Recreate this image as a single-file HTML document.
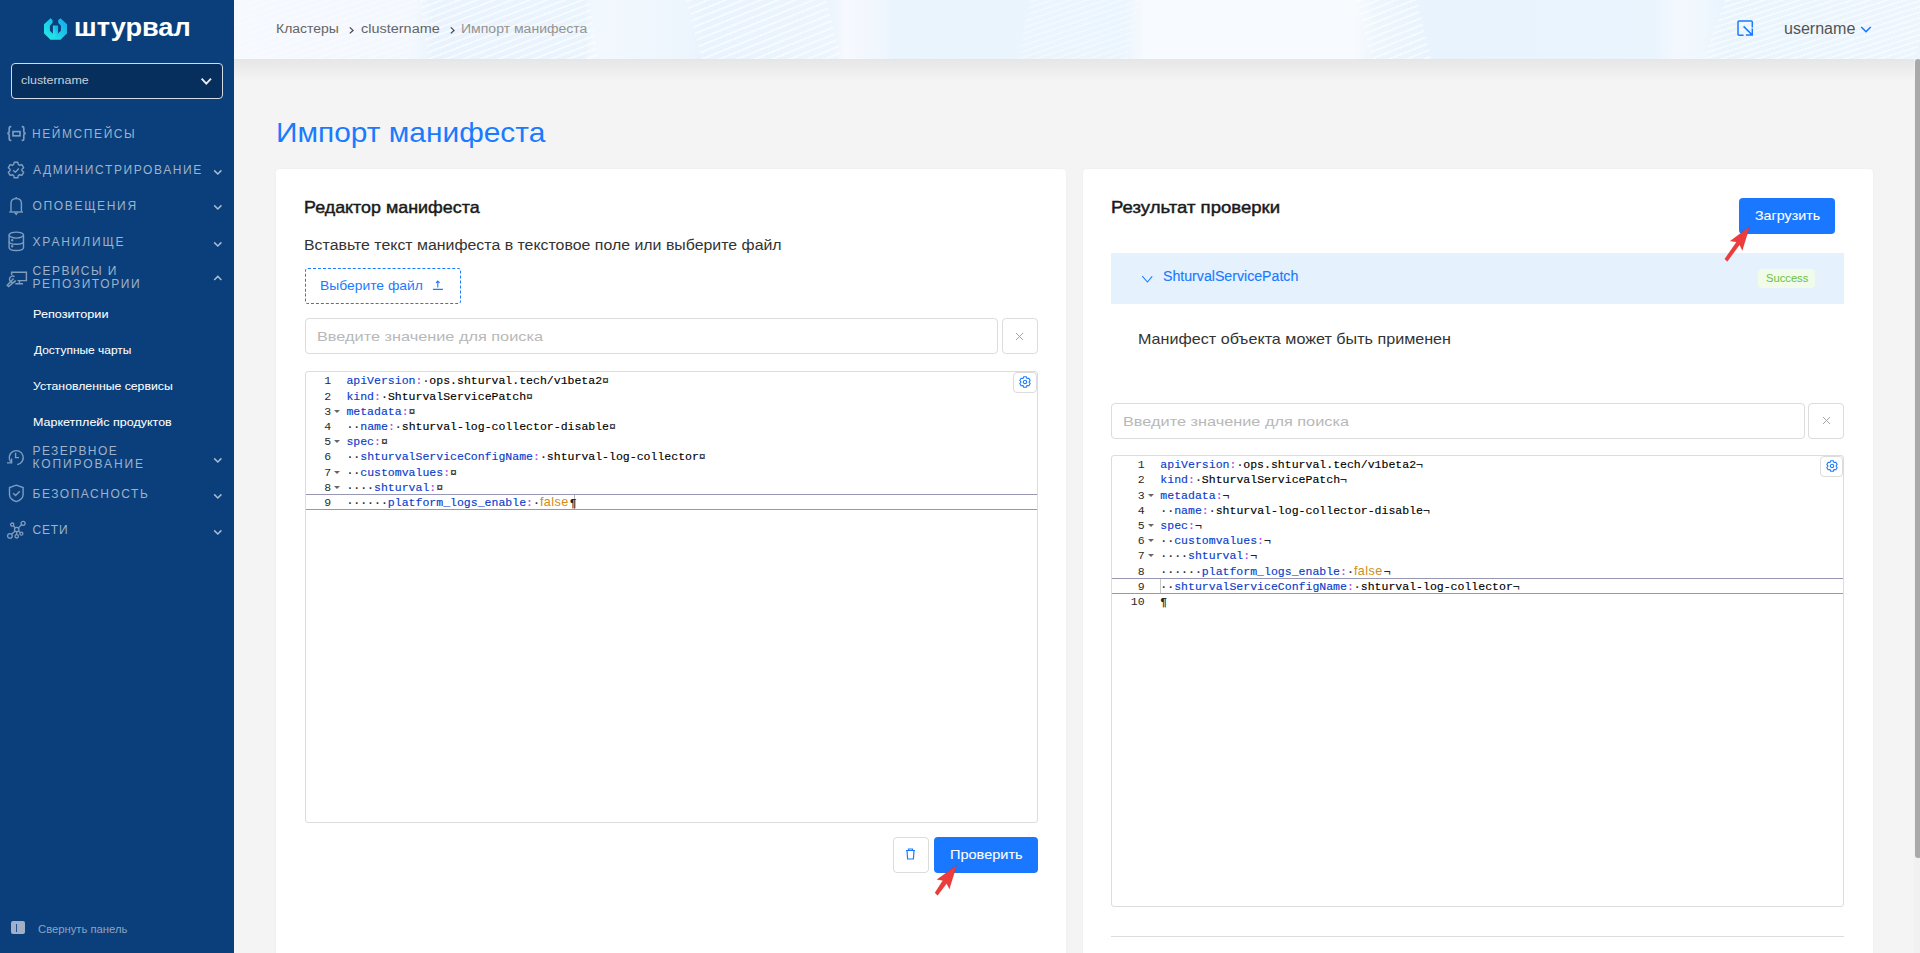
<!DOCTYPE html>
<html lang="ru">
<head>
<meta charset="utf-8">
<title>Импорт манифеста</title>
<style>
*{box-sizing:border-box;margin:0;padding:0}
html,body{width:1920px;height:953px;overflow:hidden}
body{position:relative;background:#f4f4f4;font-family:"Liberation Sans",sans-serif;color:#333}
.a{position:absolute}
.t{position:absolute;white-space:nowrap;line-height:1;transform-origin:0 0}
#side{left:0;top:0;width:234px;height:953px;background:#0a3f7b}
#hdr{left:234px;top:0;width:1686px;height:59px;background:linear-gradient(90deg,#f6f9fe 0px,#f3f8fe 180px,#e9f3fd 200px,#eaf4fd 350px,#f2f8fe 360px,#eef6fd 450px,#e8f3fd 470px,#edf5fd 600px,#f6f9fe 610px,#f0f6fd 650px,#e9f4fd 660px,#ebf5fd 890px,#f7fafe 910px,#f8fbfe 1120px,#eef6fd 1140px,#e8f3fd 1200px,#eaf4fd 1420px,#f3f8fe 1440px,#f0f7fd 1470px,#e9f4fd 1490px,#edf6fd 1686px);overflow:hidden}
.stripes{position:absolute;top:-10px;height:80px;background:repeating-linear-gradient(160deg,rgba(255,255,255,0) 0px,rgba(255,255,255,0) 4px,rgba(255,255,255,.55) 4px,rgba(255,255,255,.55) 6px)}
#hshadow{left:234px;top:59px;width:1686px;height:22px;background:linear-gradient(#e6e6e6,#f4f4f4)}
.card{background:#fff;border-radius:4px;box-shadow:0 0 3px rgba(0,0,0,.04)}
.inp{border:1px solid #dcdcdc;border-radius:4px;background:#fff}
.grp{color:#9fb2ca;font-size:12px;letter-spacing:2.1px}
.sub{color:#fff;font-size:11px}
.chev{position:absolute;width:6px;height:6px;border-right:1.6px solid #9fb2ca;border-bottom:1.6px solid #9fb2ca;transform:rotate(45deg)}
.code{font-family:"Liberation Mono",monospace;font-size:11.53px;line-height:15.23px;white-space:pre;color:#000;-webkit-text-stroke-width:0.15px}
.ln{position:absolute;font-family:"Liberation Mono",monospace;font-size:11.53px;color:#2a2a2a;white-space:pre;text-align:right}
.fold{width:0;height:0;border-left:3px solid transparent;border-right:3px solid transparent;border-top:3.5px solid #666;margin-top:6px}
.k{color:#0a3ccc}.c{color:#b648e6}.w{color:#222}.f{color:#d28c17;font-family:"Liberation Sans",sans-serif;font-size:12.6px;display:inline-block;width:29.8px;letter-spacing:0.45px;-webkit-text-stroke-width:0}
</style>
</head>
<body>
<!-- SIDEBAR -->
<div id="side" class="a">
  <svg class="a" style="left:44px;top:17.8px" width="23" height="22" viewBox="0 0 23 21.5">
    <defs><linearGradient id="lg" x1="0" y1="1" x2="1" y2="0"><stop offset="0" stop-color="#22f3e4"/><stop offset="1" stop-color="#1ba3ea"/></linearGradient></defs>
    <path fill="url(#lg)" d="M6.5 0 L8.6 1.8 L8.6 4.4 L5.9 7.6 L5.9 12.6 L8.9 15.6 L13.9 15.6 L16.9 12.6 L16.9 7.6 L14.2 4.4 L14.2 1.8 L16.5 0 L23 6 L23 15 L16.5 21.5 L6.5 21.5 L0 15 L0 6 Z"/>
    <rect fill="url(#lg)" x="8.9" y="7.2" width="5.2" height="11"/>
  </svg>

  <div class="a" style="left:11px;top:63px;width:212px;height:36px;border:1.5px solid #d5dbe4;border-radius:4px;background:#062f5e"></div>
  <svg class="a" style="left:200px;top:77px" width="13" height="9" viewBox="0 0 13 9"><path d="M1.6 1.6 L6.3 6.6 L11 1.6" fill="none" stroke="#e9edf3" stroke-width="1.9"/></svg>

  <!-- groups -->
  <svg class="a" style="left:6px;top:125px" width="21" height="17" viewBox="0 0 21 17" fill="none" stroke="#819cbd" stroke-width="1.65">
    <path d="M5.3 1.6 H4.6 Q3.2 1.6 3.2 3 V6.8 Q3.2 8.2 1.3 8.4 Q3.2 8.6 3.2 10 V14 Q3.2 15.4 4.6 15.4 H5.3"/>
    <path d="M15.7 1.6 H16.4 Q17.8 1.6 17.8 3 V6.8 Q17.8 8.2 19.7 8.4 Q17.8 8.6 17.8 10 V14 Q17.8 15.4 16.4 15.4 H15.7"/>
    <rect x="7" y="6.6" width="7" height="4.2"/>
  </svg>
  <svg class="a" style="left:7px;top:160.5px" width="18" height="18" viewBox="0 0 18 18" fill="none" stroke="#819cbd" stroke-width="1.4" stroke-linejoin="round">
    <path d="M6.75 3.44 L7.20 1.21 L10.80 1.21 L11.25 3.44 L12.69 4.27 L14.85 3.54 L16.65 6.66 L14.94 8.16 L14.94 9.84 L16.65 11.34 L14.85 14.46 L12.69 13.73 L11.25 14.56 L10.80 16.79 L7.20 16.79 L6.75 14.56 L5.31 13.73 L3.15 14.46 L1.35 11.34 L3.06 9.84 L3.06 8.16 L1.35 6.66 L3.15 3.54 L5.31 4.27 Z"/>
    <path d="M6.1 9.3 L8.3 11.2 L11.9 7.6"/>
  </svg>
  <svg class="a" style="left:8px;top:196px" width="16" height="20" viewBox="0 0 16 20" fill="none" stroke="#819cbd" stroke-width="1.4">
    <path d="M3 15.8 V7.2 Q3 2.6 8.2 2.6 Q13.4 2.6 13.4 7.2 V15.8"/>
    <path d="M1.3 16 H15"/><path d="M8.2 1 V2.6"/><path d="M6.6 16.4 L8.2 18.4 L9.8 16.4"/>
  </svg>
  <svg class="a" style="left:7px;top:231px" width="19" height="21" viewBox="0 0 19 21" fill="none" stroke="#819cbd" stroke-width="1.4">
    <ellipse cx="9.3" cy="4.1" rx="7.2" ry="3"/>
    <path d="M2.1 4.1 V16.5 Q2.1 19.5 9.3 19.5 Q16.5 19.5 16.5 16.5 V4.1"/>
    <path d="M2.1 10.5 Q2.1 13.2 9.3 13.2 Q16.5 13.2 16.5 10.5"/>
    <circle cx="5.2" cy="9.3" r="0.5" fill="#819cbd"/><circle cx="5.2" cy="15.3" r="0.5" fill="#819cbd"/>
  </svg>
  <svg class="a" style="left:5px;top:270px" width="23" height="18" viewBox="0 0 23 18" fill="none" stroke="#819cbd" stroke-width="1.4">
    <path d="M6.6 5 V2.3 H21.4 V10.6 H12.5"/><path d="M14.5 10.6 V13.4 M10.4 13.8 H18"/>
    <path d="M9.5 6.6 A3.2 3.2 0 1 0 10.6 10.6 L3.6 16.6 L2.2 15.2 L8.6 8.4"/>
  </svg>
  <svg class="a" style="left:5px;top:449px" width="21" height="17" viewBox="0 0 21 17" fill="none" stroke="#819cbd" stroke-width="1.4">
    <path d="M5.6 12.8 A7 7 0 1 1 12.2 15.6"/><path d="M2 13.9 H6.6 V9.4"/><path d="M10.6 3.8 V8.6 H14"/>
  </svg>
  <svg class="a" style="left:7.5px;top:484px" width="17" height="19" viewBox="0 0 17 19" fill="none" stroke="#819cbd" stroke-width="1.4">
    <path d="M8.3 1.2 L15.1 3.6 V10.5 Q15.1 15.4 8.3 17.6 Q1.5 15.4 1.5 10.5 V3.6 Z"/><path d="M5.2 9.2 L7.6 11.5 L11.8 7.2"/>
  </svg>
  <svg class="a" style="left:6px;top:520px" width="21" height="20" viewBox="0 0 21 20" fill="none" stroke="#819cbd" stroke-width="1.3">
    <circle cx="6.2" cy="4.6" r="1.6"/><circle cx="17.1" cy="3.3" r="2"/><circle cx="10.7" cy="9.5" r="2.2"/>
    <circle cx="3.9" cy="15.9" r="2.3"/><circle cx="10.7" cy="16.3" r="1.7"/><circle cx="15.4" cy="13.7" r="1.5"/>
    <path d="M7.3 5.8 L9.2 7.8 M15.6 4.7 L12.4 7.9 M9.1 11.1 L5.6 14.3 M10.7 11.7 V14.6 M12.5 10.9 L14.2 12.6"/>
  </svg>
  <svg class="a" style="left:213.2px;top:168.6px" width="10" height="7" viewBox="0 0 10 7"><path d="M1.2 1.4 L4.8 5 L8.4 1.4" fill="none" stroke="#a9bbd0" stroke-width="1.5"/></svg>
  <svg class="a" style="left:213.2px;top:204.4px" width="10" height="7" viewBox="0 0 10 7"><path d="M1.2 1.4 L4.8 5 L8.4 1.4" fill="none" stroke="#a9bbd0" stroke-width="1.5"/></svg>
  <svg class="a" style="left:213.2px;top:240.7px" width="10" height="7" viewBox="0 0 10 7"><path d="M1.2 1.4 L4.8 5 L8.4 1.4" fill="none" stroke="#a9bbd0" stroke-width="1.5"/></svg>
  <svg class="a" style="left:213.2px;top:275.4px" width="10" height="7" viewBox="0 0 10 7"><path d="M1.2 5 L4.8 1.4 L8.4 5" fill="none" stroke="#a9bbd0" stroke-width="1.5"/></svg>
  <svg class="a" style="left:213.2px;top:456.6px" width="10" height="7" viewBox="0 0 10 7"><path d="M1.2 1.4 L4.8 5 L8.4 1.4" fill="none" stroke="#a9bbd0" stroke-width="1.5"/></svg>
  <svg class="a" style="left:213.2px;top:492.5px" width="10" height="7" viewBox="0 0 10 7"><path d="M1.2 1.4 L4.8 5 L8.4 1.4" fill="none" stroke="#a9bbd0" stroke-width="1.5"/></svg>
  <svg class="a" style="left:213.2px;top:528.8px" width="10" height="7" viewBox="0 0 10 7"><path d="M1.2 1.4 L4.8 5 L8.4 1.4" fill="none" stroke="#a9bbd0" stroke-width="1.5"/></svg>
  <div class="a" style="left:11px;top:921px;width:14px;height:13px;border-radius:2px;background:#9fb0c8"></div>
  <div class="a" style="left:15.5px;top:923.5px;width:1px;height:8.5px;background:#274f8c"></div>
</div>

<!-- HEADER -->
<div id="hdr" class="a">
  <div class="stripes" style="left:-20px;width:200px;transform:skewX(-10deg);opacity:.5"></div>
  <div class="stripes" style="left:190px;width:170px;transform:skewX(8deg)"></div>
  <div class="stripes" style="left:460px;width:140px;transform:skewX(15deg)"></div>
  <div class="stripes" style="left:790px;width:110px;transform:skewX(-12deg);opacity:.6"></div>
  <div class="stripes" style="left:1130px;width:60px;transform:skewX(14deg)"></div>
  <div class="stripes" style="left:1480px;width:210px;transform:skewX(-20deg)"></div>
</div>
<div id="hshadow" class="a"></div>
<svg class="a" style="left:348px;top:26px" width="8" height="9" viewBox="0 0 8 9"><path d="M1.8 1.4 L5 4.4 L1.8 7.4" fill="none" stroke="#4a4a4a" stroke-width="1.3"/></svg>
<svg class="a" style="left:449px;top:26px" width="8" height="9" viewBox="0 0 8 9"><path d="M1.8 1.4 L5 4.4 L1.8 7.4" fill="none" stroke="#4a4a4a" stroke-width="1.3"/></svg>

<svg class="a" style="left:1736px;top:19px" width="18" height="18" viewBox="0 0 18 18">
  <path d="M7.6 16.2 H3 Q2 16.2 2 15.2 V2.9 Q2 1.9 3 1.9 H15.3 Q16.3 1.9 16.3 2.9 V8.4" fill="none" stroke="#1a7bff" stroke-width="1.5"/>
  <path d="M7.6 7.4 L15.6 15.4 M9.8 16 H16.3 V9.6" fill="none" stroke="#1a7bff" stroke-width="1.5"/>
</svg>
<svg class="a" style="left:1860px;top:25px" width="12" height="9" viewBox="0 0 12 9"><path d="M1.2 2 L6 6.6 L10.8 2" fill="none" stroke="#1a7bff" stroke-width="1.55"/></svg>

<!-- scrollbar -->
<div class="a" style="left:1914px;top:59px;width:6px;height:894px;background:#f1f1f1"></div>
<div class="a" style="left:1915px;top:59px;width:6px;height:799px;background:#a9a9a9;border-radius:3px"></div>

<!-- TITLE -->

<!-- LEFT CARD -->
<div class="a card" style="left:276px;top:169px;width:790px;height:800px"></div>
<div class="a" style="left:305px;top:268px;width:156px;height:36px;border:1px dashed #1a7bff;border-radius:3px"></div>
<svg class="a" style="left:432px;top:279px" width="12" height="12" viewBox="0 0 12 12"><path d="M5.8 2 V8.6 M4 3.9 L5.8 2 L7.6 3.9 M0.9 10.4 H10.9" fill="none" stroke="#1a7bff" stroke-width="1.1"/></svg>

<div class="a inp" style="left:305px;top:318px;width:693px;height:36px"></div>
<div class="a inp" style="left:1002px;top:318px;width:36px;height:36px"></div>
<svg class="a" style="left:1015px;top:332px" width="9" height="9" viewBox="0 0 9 9"><path d="M1 1 L8 8 M8 1 L1 8" stroke="#a5a5a5" stroke-width="1"/></svg>

<div class="a inp" style="left:305px;top:371px;width:733px;height:452px;border-radius:3px"></div>
<div class="a" style="left:306px;top:494px;width:731px;height:16px;border-top:1px solid #9897b3;border-bottom:1px solid #9897b3"></div>
<div class="a" style="left:574px;top:495px;width:1px;height:14px;background:#b8b8b8"></div>
<div class="a inp" style="left:1013px;top:372px;width:24px;height:21px;border-radius:4px"></div>
<svg class="a" style="left:1019px;top:376px" width="12" height="12" viewBox="0 0 12 12"><path d="M4.16 2.23 L4.69 0.76 L7.31 0.76 L7.84 2.23 L8.35 2.52 L9.88 2.25 L11.19 4.51 L10.19 5.71 L10.19 6.29 L11.19 7.49 L9.88 9.75 L8.35 9.48 L7.84 9.77 L7.31 11.24 L4.69 11.24 L4.16 9.77 L3.65 9.48 L2.12 9.75 L0.81 7.49 L1.81 6.29 L1.81 5.71 L0.81 4.51 L2.12 2.25 L3.65 2.52 Z" fill="none" stroke="#1a7bff" stroke-width="1.1" stroke-linejoin="round"/><circle cx="6" cy="6" r="1.7" fill="none" stroke="#1a7bff" stroke-width="1.1"/></svg>

<div id="codeL"><div class="t code" style="left:346.4px;top:373.30px"><span class="w"></span><span class="k">apiVersion</span><span class="c">:</span><span class="w">·</span>ops.shturval.tech/v1beta2<span class="w">¤</span></div>
<div class="ln" style="left:291.2px;width:40px;top:373.30px;line-height:15.23px">1</div>
<div class="t code" style="left:346.4px;top:388.53px"><span class="w"></span><span class="k">kind</span><span class="c">:</span><span class="w">·</span>ShturvalServicePatch<span class="w">¤</span></div>
<div class="ln" style="left:291.2px;width:40px;top:388.53px;line-height:15.23px">2</div>
<div class="t code" style="left:346.4px;top:403.76px"><span class="w"></span><span class="k">metadata</span><span class="c">:</span><span class="w">¤</span></div>
<div class="ln" style="left:291.2px;width:40px;top:403.76px;line-height:15.23px">3</div>
<div class="t fold" style="left:334.2px;top:403.76px"></div>
<div class="t code" style="left:346.4px;top:418.99px"><span class="w">··</span><span class="k">name</span><span class="c">:</span><span class="w">·</span>shturval-log-collector-disable<span class="w">¤</span></div>
<div class="ln" style="left:291.2px;width:40px;top:418.99px;line-height:15.23px">4</div>
<div class="t code" style="left:346.4px;top:434.22px"><span class="w"></span><span class="k">spec</span><span class="c">:</span><span class="w">¤</span></div>
<div class="ln" style="left:291.2px;width:40px;top:434.22px;line-height:15.23px">5</div>
<div class="t fold" style="left:334.2px;top:434.22px"></div>
<div class="t code" style="left:346.4px;top:449.45px"><span class="w">··</span><span class="k">shturvalServiceConfigName</span><span class="c">:</span><span class="w">·</span>shturval-log-collector<span class="w">¤</span></div>
<div class="ln" style="left:291.2px;width:40px;top:449.45px;line-height:15.23px">6</div>
<div class="t code" style="left:346.4px;top:464.68px"><span class="w">··</span><span class="k">customvalues</span><span class="c">:</span><span class="w">¤</span></div>
<div class="ln" style="left:291.2px;width:40px;top:464.68px;line-height:15.23px">7</div>
<div class="t fold" style="left:334.2px;top:464.68px"></div>
<div class="t code" style="left:346.4px;top:479.91px"><span class="w">····</span><span class="k">shturval</span><span class="c">:</span><span class="w">¤</span></div>
<div class="ln" style="left:291.2px;width:40px;top:479.91px;line-height:15.23px">8</div>
<div class="t fold" style="left:334.2px;top:479.91px"></div>
<div class="t code" style="left:346.4px;top:495.14px"><span class="w">······</span><span class="k">platform_logs_enable</span><span class="c">:</span><span class="w">·</span><span class="f">false</span><span class="w">¶</span></div>
<div class="ln" style="left:291.2px;width:40px;top:495.14px;line-height:15.23px">9</div></div><!--/codeL-->

<div class="a inp" style="left:893px;top:837px;width:36px;height:36px"></div>
<svg class="a" style="left:905px;top:848px" width="11" height="12" viewBox="0 0 11 12"><path d="M1 2.5 H10 M3.5 2.5 V1 H7.5 V2.5 M2 2.5 L2.6 11 H8.4 L9 2.5" fill="none" stroke="#1a7bff" stroke-width="1.2"/></svg>
<div class="a" style="left:934px;top:837px;width:104px;height:36px;background:#1a77ff;border-radius:4px"></div>

<!-- RIGHT CARD -->
<div class="a card" style="left:1083px;top:169px;width:790px;height:800px"></div>
<div class="a" style="left:1739px;top:198px;width:96px;height:36px;background:#1a77ff;border-radius:4px"></div>

<div class="a" style="left:1111px;top:253px;width:733px;height:51px;background:#e5f2fe"></div>
<svg class="a" style="left:1141px;top:273px" width="13" height="11" viewBox="0 0 13 11"><path d="M1.3 3.1 L6.4 9 L11.2 3.3" fill="none" stroke="#1a7bff" stroke-width="1.05"/></svg>
<div class="a" style="left:1758px;top:269px;width:57px;height:19px;background:#f0fbe9;border-radius:4px"></div>


<div class="a inp" style="left:1111px;top:403px;width:694px;height:36px"></div>
<div class="a inp" style="left:1808px;top:403px;width:36px;height:36px"></div>
<svg class="a" style="left:1821.5px;top:416px" width="9" height="9" viewBox="0 0 9 9"><path d="M1 1 L8 8 M8 1 L1 8" stroke="#a5a5a5" stroke-width="1"/></svg>

<div class="a inp" style="left:1111px;top:455px;width:733px;height:452px;border-radius:3px"></div>
<div class="a" style="left:1112px;top:578px;width:731px;height:16px;border-top:1px solid #9897b3;border-bottom:1px solid #9897b3"></div>
<div class="a" style="left:1160px;top:579px;width:1px;height:14px;background:#c8c8c8"></div>
<div class="a inp" style="left:1820px;top:456px;width:23px;height:21px;border-radius:4px"></div>
<svg class="a" style="left:1826px;top:460px" width="12" height="12" viewBox="0 0 12 12"><path d="M4.16 2.23 L4.69 0.76 L7.31 0.76 L7.84 2.23 L8.35 2.52 L9.88 2.25 L11.19 4.51 L10.19 5.71 L10.19 6.29 L11.19 7.49 L9.88 9.75 L8.35 9.48 L7.84 9.77 L7.31 11.24 L4.69 11.24 L4.16 9.77 L3.65 9.48 L2.12 9.75 L0.81 7.49 L1.81 6.29 L1.81 5.71 L0.81 4.51 L2.12 2.25 L3.65 2.52 Z" fill="none" stroke="#1a7bff" stroke-width="1.1" stroke-linejoin="round"/><circle cx="6" cy="6" r="1.7" fill="none" stroke="#1a7bff" stroke-width="1.1"/></svg>
<div id="codeR"><div class="t code" style="left:1160.35px;top:457.10px"><span class="w"></span><span class="k">apiVersion</span><span class="c">:</span><span class="w">·</span>ops.shturval.tech/v1beta2<span class="w">¬</span></div>
<div class="ln" style="left:1104.6px;width:40px;top:457.10px;line-height:15.23px">1</div>
<div class="t code" style="left:1160.35px;top:472.33px"><span class="w"></span><span class="k">kind</span><span class="c">:</span><span class="w">·</span>ShturvalServicePatch<span class="w">¬</span></div>
<div class="ln" style="left:1104.6px;width:40px;top:472.33px;line-height:15.23px">2</div>
<div class="t code" style="left:1160.35px;top:487.56px"><span class="w"></span><span class="k">metadata</span><span class="c">:</span><span class="w">¬</span></div>
<div class="ln" style="left:1104.6px;width:40px;top:487.56px;line-height:15.23px">3</div>
<div class="t fold" style="left:1147.6px;top:487.56px"></div>
<div class="t code" style="left:1160.35px;top:502.79px"><span class="w">··</span><span class="k">name</span><span class="c">:</span><span class="w">·</span>shturval-log-collector-disable<span class="w">¬</span></div>
<div class="ln" style="left:1104.6px;width:40px;top:502.79px;line-height:15.23px">4</div>
<div class="t code" style="left:1160.35px;top:518.02px"><span class="w"></span><span class="k">spec</span><span class="c">:</span><span class="w">¬</span></div>
<div class="ln" style="left:1104.6px;width:40px;top:518.02px;line-height:15.23px">5</div>
<div class="t fold" style="left:1147.6px;top:518.02px"></div>
<div class="t code" style="left:1160.35px;top:533.25px"><span class="w">··</span><span class="k">customvalues</span><span class="c">:</span><span class="w">¬</span></div>
<div class="ln" style="left:1104.6px;width:40px;top:533.25px;line-height:15.23px">6</div>
<div class="t fold" style="left:1147.6px;top:533.25px"></div>
<div class="t code" style="left:1160.35px;top:548.48px"><span class="w">····</span><span class="k">shturval</span><span class="c">:</span><span class="w">¬</span></div>
<div class="ln" style="left:1104.6px;width:40px;top:548.48px;line-height:15.23px">7</div>
<div class="t fold" style="left:1147.6px;top:548.48px"></div>
<div class="t code" style="left:1160.35px;top:563.71px"><span class="w">······</span><span class="k">platform_logs_enable</span><span class="c">:</span><span class="w">·</span><span class="f">false</span><span class="w">¬</span></div>
<div class="ln" style="left:1104.6px;width:40px;top:563.71px;line-height:15.23px">8</div>
<div class="t code" style="left:1160.35px;top:578.94px"><span class="w">··</span><span class="k">shturvalServiceConfigName</span><span class="c">:</span><span class="w">·</span>shturval-log-collector<span class="w">¬</span></div>
<div class="ln" style="left:1104.6px;width:40px;top:578.94px;line-height:15.23px">9</div>
<div class="t code" style="left:1160.35px;top:594.17px"><span class="w">¶</span></div>
<div class="ln" style="left:1104.6px;width:40px;top:594.17px;line-height:15.23px">10</div></div><!--/codeR-->

<div class="a" style="left:1111px;top:936px;width:733px;height:1px;background:#dcdcdc"></div>

<!-- red arrows -->
<svg class="a" style="left:930px;top:860px;overflow:visible" width="32" height="40" viewBox="0 0 32 40"><path d="M26.7 5.3 L19.4 29.1 L16.6 23.6 L7.6 35.4 L4.9 32.8 L12.8 20.5 L6.9 19.6 Z" fill="#ee3b3b" stroke="rgba(120,0,0,0.18)" stroke-width="0.6" stroke-linejoin="round"/></svg>
<svg class="a" style="left:1720px;top:222px;overflow:visible" width="34" height="42" viewBox="0 0 34 42"><path d="M29.7 4.4 L22.3 28.5 L19.6 22.7 L7.3 39.5 L4.7 36.9 L16.5 19.9 L10.2 19.1 Z" fill="#ee3b3b" stroke="rgba(120,0,0,0.18)" stroke-width="0.6" stroke-linejoin="round"/></svg>
<div id="t_logo" class="t" style="left:73.60px;top:13.90px;font-size:26px;transform:scaleX(1.0455);color:#fff;font-weight:bold">штурвал</div>
<div id="t_sel" class="t" style="left:21.00px;top:75.01px;font-size:11.5px;transform:scaleX(1.0809);color:#c9d1dc">clustername</div>
<div id="t_g1" class="t grp" style="left:32.00px;top:127.91px;font-size:12px;letter-spacing:1.578px">НЕЙМСПЕЙСЫ</div>
<div id="t_g2" class="t grp" style="left:33.00px;top:164.21px;font-size:12px;letter-spacing:1.606px">АДМИНИСТРИРОВАНИЕ</div>
<div id="t_g3" class="t grp" style="left:32.50px;top:200.00px;font-size:12px;letter-spacing:1.672px">ОПОВЕЩЕНИЯ</div>
<div id="t_g4" class="t grp" style="left:32.50px;top:236.25px;font-size:12px;letter-spacing:1.850px">ХРАНИЛИЩЕ</div>
<div id="t_g5a" class="t grp" style="left:32.50px;top:265.00px;font-size:12px;letter-spacing:1.413px">СЕРВИСЫ И</div>
<div id="t_g5b" class="t grp" style="left:32.50px;top:278.10px;font-size:12px;letter-spacing:1.585px">РЕПОЗИТОРИИ</div>
<div id="t_s1" class="t sub" style="left:33.00px;top:309.01px;font-size:11px;transform:scaleX(1.1519);-webkit-text-stroke:0.05px #fff">Репозитории</div>
<div id="t_s2" class="t sub" style="left:34.00px;top:344.90px;font-size:11px;transform:scaleX(1.0860);-webkit-text-stroke:0.05px #fff">Доступные чарты</div>
<div id="t_s3" class="t sub" style="left:33.00px;top:381.01px;font-size:11px;transform:scaleX(1.1136);-webkit-text-stroke:0.05px #fff">Установленные сервисы</div>
<div id="t_s4" class="t sub" style="left:33.00px;top:416.51px;font-size:11px;transform:scaleX(1.1361);-webkit-text-stroke:0.05px #fff">Маркетплейс продуктов</div>
<div id="t_g6a" class="t grp" style="left:32.50px;top:445.00px;font-size:12px;letter-spacing:1.394px">РЕЗЕРВНОЕ</div>
<div id="t_g6b" class="t grp" style="left:32.50px;top:458.10px;font-size:12px;letter-spacing:1.915px">КОПИРОВАНИЕ</div>
<div id="t_g7" class="t grp" style="left:32.50px;top:488.10px;font-size:12px;letter-spacing:1.523px">БЕЗОПАСНОСТЬ</div>
<div id="t_g8" class="t grp" style="left:32.50px;top:524.41px;font-size:12px;letter-spacing:0.850px">СЕТИ</div>
<div id="t_foot" class="t" style="left:37.50px;top:923.50px;font-size:10.5px;transform:scaleX(1.0716);color:#8ea4c0">Свернуть панель</div>
<div id="t_bc1" class="t" style="left:276.00px;top:23.00px;font-size:12.3px;transform:scaleX(1.1368);color:#656565">Кластеры</div>
<div id="t_bc2" class="t" style="left:361.00px;top:23.00px;font-size:12.3px;transform:scaleX(1.1762);color:#656565">clustername</div>
<div id="t_bc3" class="t" style="left:461.00px;top:23.00px;font-size:12.3px;transform:scaleX(1.1410);color:#939393">Импорт манифеста</div>
<div id="t_user" class="t" style="left:1784.00px;top:20.76px;font-size:16px;transform:scaleX(1.0023);color:#545454">username</div>
<div id="t_title" class="t" style="left:276.00px;top:119.01px;font-size:28px;transform:scaleX(1.0673);color:#1a7bff">Импорт манифеста</div>
<div id="t_h1" class="t" style="left:304.00px;top:199.10px;font-size:17px;transform:scaleX(1.0521);color:#1a1a1a;font-weight:normal;-webkit-text-stroke:0.45px #1a1a1a">Редактор манифеста</div>
<div id="t_desc" class="t" style="left:304.00px;top:237.91px;font-size:14px;transform:scaleX(1.1351);color:#333">Вставьте текст манифеста в текстовое поле или выберите файл</div>
<div id="t_btnf" class="t" style="left:320.00px;top:280.10px;font-size:12.6px;transform:scaleX(1.1003);color:#1a7bff">Выберите файл</div>
<div id="t_ph1" class="t" style="left:317.00px;top:329.71px;font-size:13.6px;transform:scaleX(1.1984);color:#b8b8b8">Введите значение для поиска</div>
<div id="t_prov" class="t" style="left:949.80px;top:848.21px;font-size:13px;transform:scaleX(1.1173);color:#fff;-webkit-text-stroke:0.08px #fff">Проверить</div>
<div id="t_h2" class="t" style="left:1111.00px;top:199.21px;font-size:17px;transform:scaleX(1.0922);color:#1a1a1a;font-weight:normal;-webkit-text-stroke:0.45px #1a1a1a">Результат проверки</div>
<div id="t_zagr" class="t" style="left:1755.00px;top:208.91px;font-size:13px;transform:scaleX(1.0969);color:#fff;-webkit-text-stroke:0.08px #fff">Загрузить</div>
<div id="t_stp" class="t" style="left:1162.60px;top:269.40px;font-size:14px;transform:scaleX(1.0106);color:#1a7bff;-webkit-text-stroke:0.15px #1a7bff">ShturvalServicePatch</div>
<div id="t_succ" class="t" style="left:1766.00px;top:273.01px;font-size:11px;transform:scaleX(1.0177);color:#6cbf43">Success</div>
<div id="t_mani" class="t" style="left:1138.00px;top:331.20px;font-size:15px;transform:scaleX(1.0755);color:#333">Манифест объекта может быть применен</div>
<div id="t_ph2" class="t" style="left:1123.00px;top:415.21px;font-size:13.6px;transform:scaleX(1.1984);color:#b8b8b8">Введите значение для поиска</div>
</body>
</html>
